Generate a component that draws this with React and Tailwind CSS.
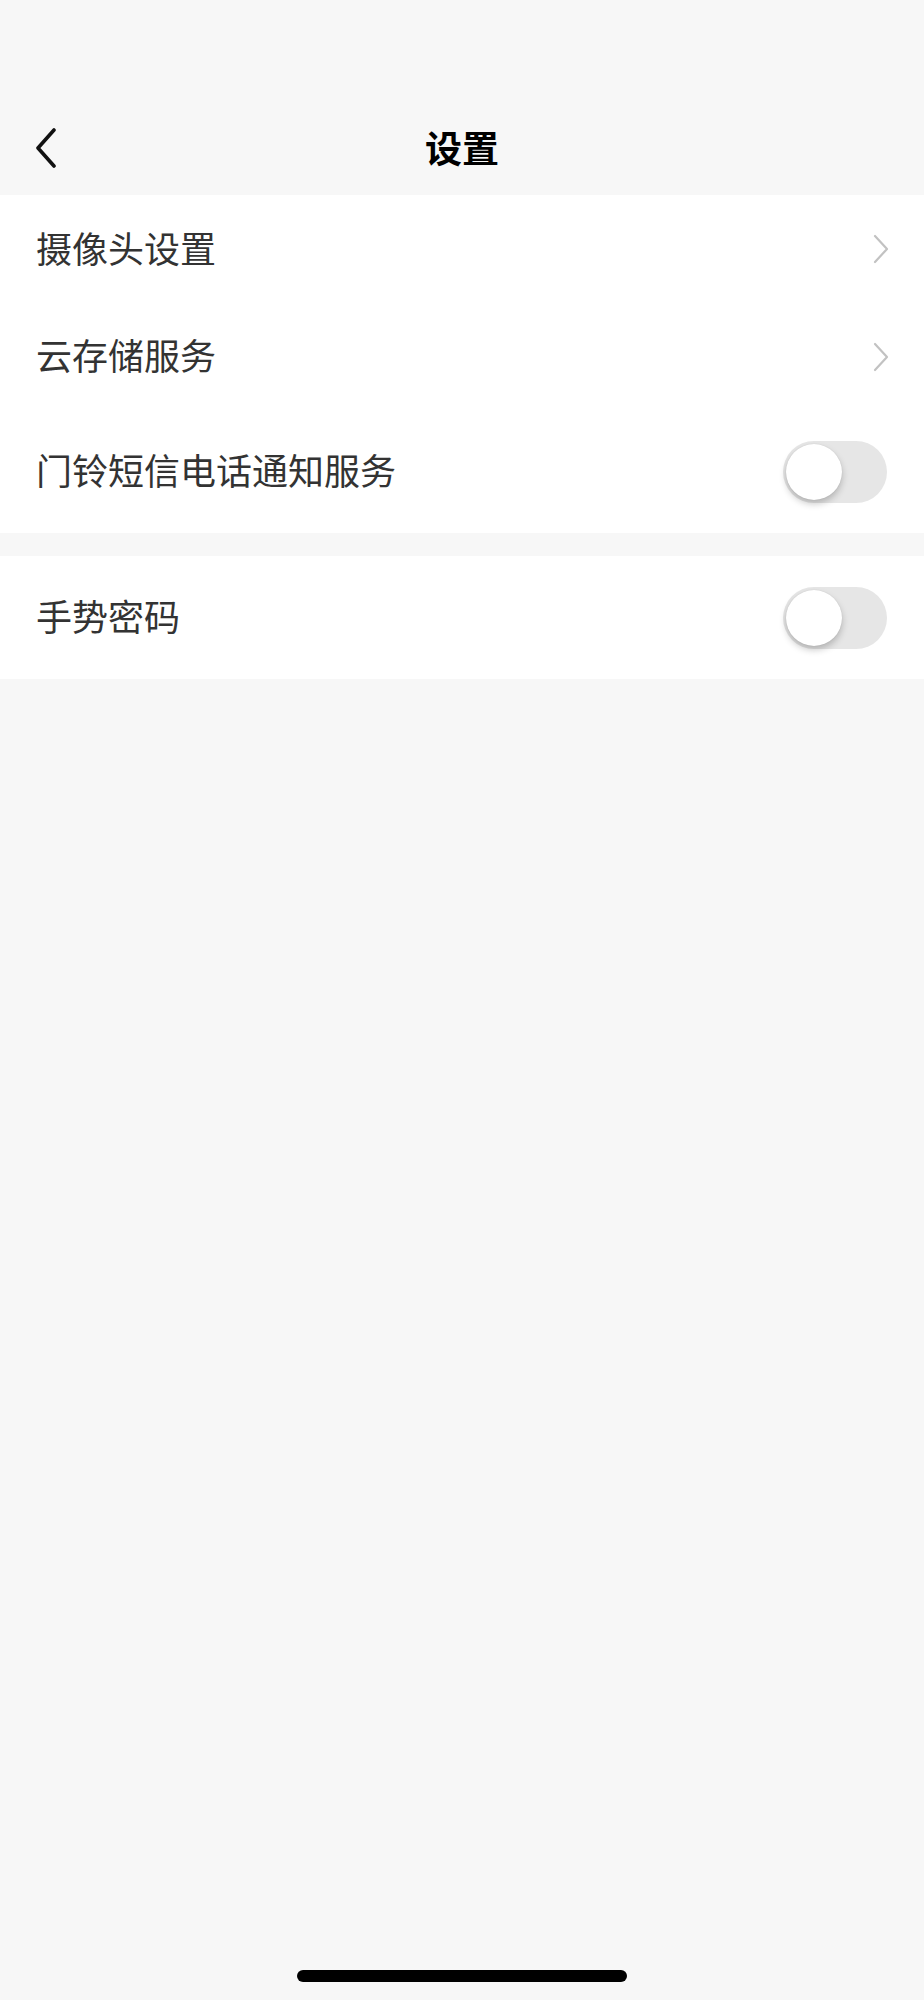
const font = { fontFamily: '"Noto Sans CJK SC", "Noto Sans", sans-serif' };

function Chevron() {
  return (
    <svg width="16" height="30" viewBox="0 0 16 30" className="mr-[35px]">
      <path d="M2 2 L14 15 L2 28" fill="none" stroke="#c2c2c2" strokeWidth="2.2" strokeLinecap="round" strokeLinejoin="round" />
    </svg>
  );
}

function Toggle() {
  return (
    <div className="mr-[37px] flex h-[62px] w-[104px] items-center rounded-full bg-[#e6e6e6] px-[3px]">
      <div className="h-[56px] w-[56px] rounded-full bg-white shadow-[0_4px_7px_rgba(0,0,0,0.22),0_0_1px_rgba(0,0,0,0.15)]" />
    </div>
  );
}

function Row({ label, height, right }) {
  return (
    <div className={`flex items-center justify-between ${height}`}>
      <span className="mb-[5px] pl-[36px] text-[36px] leading-none text-[#333333]">{label}</span>
      {right}
    </div>
  );
}

export default function App() {
  return (
    <div className="flex h-[2000px] w-full flex-col bg-[#f7f7f7]" style={font}>
      <div className="h-[100px]" />
      <div className="grid h-[95px] grid-cols-[1fr_auto_1fr] items-center">
        <svg width="24" height="40" viewBox="0 0 24 40" className="ml-[34px]">
          <path d="M20 2 L4 20 L20 38" fill="none" stroke="#111111" strokeWidth="3.6" strokeLinecap="round" strokeLinejoin="round" />
        </svg>
        <h1 className="text-[37px] font-bold leading-none text-black">设置</h1>
        <div />
      </div>

      <div className="bg-white">
        <Row label="摄像头设置" height="h-[108px]" right={<Chevron />} />
        <Row label="云存储服务" height="h-[107px]" right={<Chevron />} />
        <Row label="门铃短信电话通知服务" height="h-[123px]" right={<Toggle />} />
      </div>

      <div className="mt-[23px] bg-white">
        <Row label="手势密码" height="h-[123px]" right={<Toggle />} />
      </div>

      <div className="mt-auto mb-[18px] flex justify-center">
        <div className="h-[12px] w-[330px] rounded-full bg-black" />
      </div>
    </div>
  );
}
